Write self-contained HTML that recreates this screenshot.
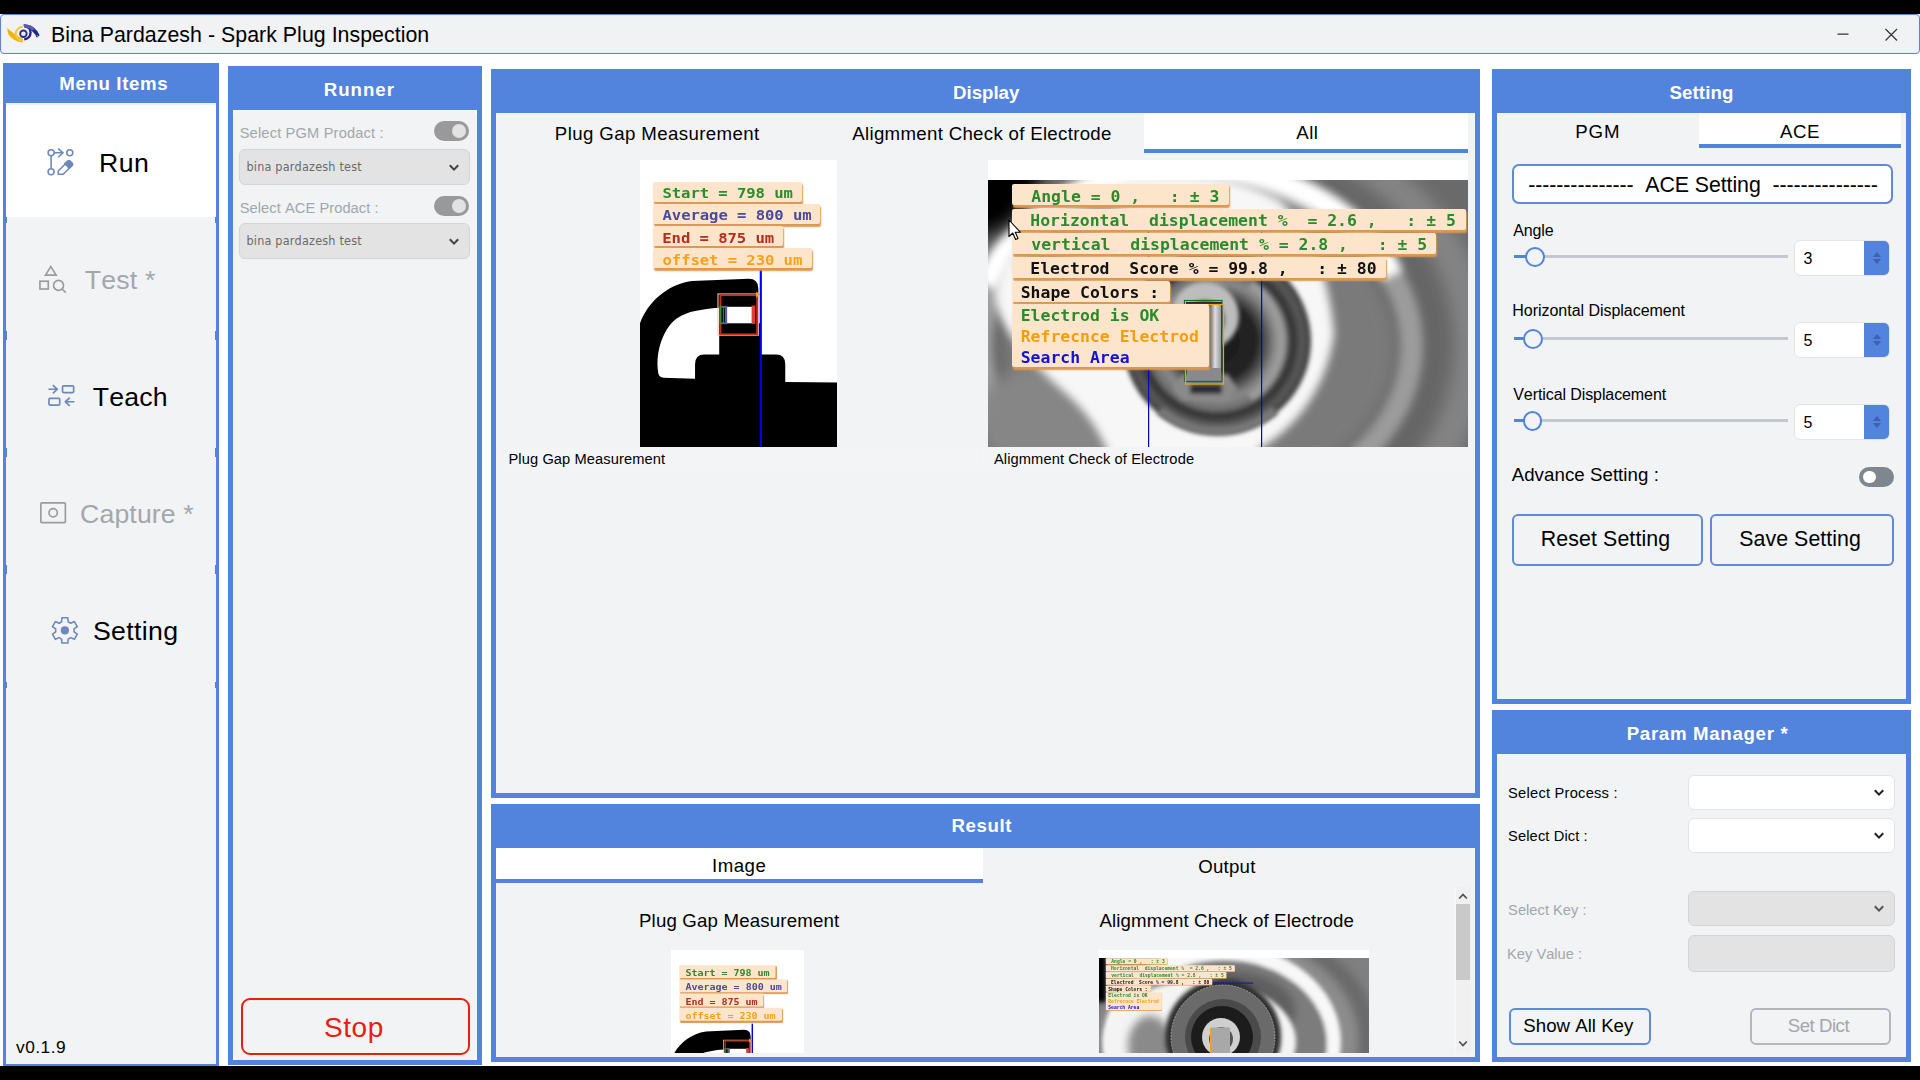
<!DOCTYPE html>
<html lang="en">
<head>
<meta charset="utf-8">
<title>Bina Pardazesh - Spark Plug Inspection</title>
<style>
*{box-sizing:border-box;margin:0;padding:0}
html,body{width:1920px;height:1080px;overflow:hidden;background:#fff}
body{position:relative;font-family:"Liberation Sans",Arial,sans-serif;color:#000;font-kerning:none}
.abs{position:absolute}
.bar{position:absolute;left:0;width:1920px;background:#000}
.panel{position:absolute;background:#5283dd}
.inner{position:absolute;background:#f1f3f5}
.t{position:absolute;white-space:pre;line-height:1}
#titlebar{position:absolute;left:0;top:14px;width:1920px;height:40px;background:#f0f2f4;border:1px solid #5f84cc;border-radius:4px;box-shadow:inset 0 0 0 1px #e6effb}
.sel{position:absolute;border-radius:6px;border:1px solid #d3d5d7;background:#e3e3e3}
.sel.w{background:#fff;border-color:#e1e3e6}
.tog{position:absolute;width:35px;height:20px;border-radius:10px;background:#999}
.tog i{position:absolute;top:3px;width:14px;height:14px;border-radius:7px;background:#e2e2e2}
.btn{position:absolute;border:2px solid #5f89da;border-radius:6px;background:#f1f3f5}
.tabon{position:absolute;background:#fff;border-bottom:4px solid #5283dd}
.lab{position:absolute;background:#fde5cb;border-radius:2px;box-shadow:1px 2.4px 1.6px #dc9850}
.lab .t{font-family:"DejaVu Sans Mono","Liberation Mono",monospace;font-weight:bold}
.spin{position:absolute;width:96px;height:35.4px;border-radius:6px;background:#fff;border:1px solid #e1e3e6;overflow:hidden}
.spin b{position:absolute;right:-1px;top:-1px;width:26.5px;height:36px;background:#5283dd}
.spin b:before{content:"";position:absolute;left:9.4px;top:11.6px;border:4.5px solid transparent;border-top:0;border-bottom:5px solid #3d62b0}
.spin b:after{content:"";position:absolute;left:9.4px;top:19px;border:4.5px solid transparent;border-bottom:0;border-top:5px solid #3d62b0}
.trk{position:absolute;height:3px;background:#c2c8cd}
.kn{position:absolute;width:19.6px;height:19.6px;margin:.2px;border-radius:10px;border:2.6px solid #5283dd;background:#f1f3f5}
</style>
</head>
<body>
<div class="bar" style="top:0;height:14px"></div>
<div class="bar" style="top:1066px;height:14px"></div>

<div id="titlebar"></div>
<svg class="abs" style="left:5.56px;top:23.26px" width="35.2" height="20.7" viewBox="150 250 950 560" fill="none">
<path d="M180 385 Q300 505 605 682 Q625 740 592 778 Q330 735 215 560 Q185 480 180 385Z" fill="#f6b400"/>
<path d="M602 350 A182 182 0 0 0 602 724" stroke="#f4c84a" stroke-width="56"/>
<circle cx="620" cy="540" r="88" stroke="#2a2a8a" stroke-width="50" fill="#e9ecfa"/>
<path d="M642 322 A170 182 0 0 1 642 690" stroke="#20208a" stroke-width="62"/>
<path d="M625 292 Q900 262 1060 580 L985 650 Q885 425 640 366Z" fill="#26268e"/>
<path d="M625 292 Q810 275 940 405 L865 450 Q780 385 640 366Z" fill="#5a5ab0"/>
<circle cx="994" cy="596" r="15" fill="#e8eaf6"/>
</svg>
<div class="t" style="left:50.90px;top:24.84px;font-size:21.33px;letter-spacing:0.034px;">Bina Pardazesh - Spark Plug Inspection</div>
<svg class="abs" style="left:1830px;top:20px" width="80" height="30" viewBox="0 0 80 30" fill="none" stroke="#333" stroke-width="1.2"><path d="M7.5 14.2H18.5M55.5 9L67 20.5M67 9L55.5 20.5"/></svg>
<div class="panel" style="left:3px;top:63px;width:216px;height:1003px"></div>
<div class="inner" style="left:6px;top:103px;width:210px;height:961px"></div>
<div class="t" style="left:59.25px;top:74.51px;font-size:18.67px;letter-spacing:0.639px;font-weight:700;color:#fff;">Menu Items</div>
<div class="abs" style="left:6px;top:103px;width:210px;height:114px;background:#fff;border-radius:3px;border-top:2px solid #edf3fc"></div>
<div class="abs" style="left:6px;top:217px;width:1px;height:6px;background:#5d7fc4"></div><div class="abs" style="left:215px;top:217px;width:1px;height:6px;background:#5d7fc4"></div>
<div class="abs" style="left:6px;top:331px;width:1px;height:9px;background:#5d7fc4"></div><div class="abs" style="left:215px;top:331px;width:1px;height:9px;background:#5d7fc4"></div>
<div class="abs" style="left:6px;top:448px;width:1px;height:9px;background:#5d7fc4"></div><div class="abs" style="left:215px;top:448px;width:1px;height:9px;background:#5d7fc4"></div>
<div class="abs" style="left:6px;top:565px;width:1px;height:9px;background:#5d7fc4"></div><div class="abs" style="left:215px;top:565px;width:1px;height:9px;background:#5d7fc4"></div>
<div class="abs" style="left:6px;top:682px;width:1px;height:6px;background:#5d7fc4"></div><div class="abs" style="left:215px;top:682px;width:1px;height:6px;background:#5d7fc4"></div>
<svg class="abs" style="left:45.56px;top:146.67px" width="28.89" height="30.00" viewBox="280 210 520 540" fill="none"><g stroke="#6f88ba" stroke-width="28"><circle cx="372" cy="315" r="54"/><circle cx="372" cy="655" r="54"/><circle cx="708" cy="315" r="54"/><path d="M372 369V601M426 315H585M500 240L585 315L500 395"/><path d="M500 700V642L672 470Q692 452 712 470L745 503Q763 523 745 543L590 700Z" stroke-linejoin="round"/><path d="M620 510L672 462Q692 446 712 462L752 503Q768 523 752 543L700 590Z" fill="#6f88ba"/></g></svg>
<div class="t" style="left:99.10px;top:149.96px;font-size:26.67px;letter-spacing:0.462px;">Run</div>
<svg class="abs" style="left:37.78px;top:263.89px" width="28.89" height="30.00" viewBox="320 250 520 540" fill="none"><g stroke="#999b9d" stroke-width="30"><path d="M550 298L455 450H647Z"/><rect x="355" y="560" width="150" height="140"/><circle cx="690" cy="635" r="90"/><path d="M755 700L820 765"/></g></svg>
<div class="t" style="left:84.70px;top:267.17px;font-size:26.67px;letter-spacing:0.210px;color:#a3a7ab;">Test *</div>
<svg class="abs" style="left:46.67px;top:384.44px" width="28.89" height="23.33" viewBox="300 260 520 420" fill="none"><g stroke="#6f88ba" stroke-width="30"><path d="M325 355H485M405 280L485 355L405 430"/><rect x="580" y="295" width="200" height="120" rx="18"/><rect x="335" y="520" width="195" height="120" rx="18"/><path d="M795 580H630M710 505L630 580L710 655"/></g></svg>
<div class="t" style="left:92.80px;top:384.07px;font-size:26.67px;letter-spacing:0.160px;">Teach</div>
<svg class="abs" style="left:38.89px;top:501.11px" width="28.89" height="23.89" viewBox="340 290 520 430" fill="none"><g stroke="#999b9d" stroke-width="30"><rect x="373" y="325" width="442" height="355" rx="18"/><circle cx="595" cy="503" r="75"/></g></svg>
<div class="t" style="left:80.10px;top:500.97px;font-size:26.67px;letter-spacing:0.120px;color:#a3a7ab;">Capture *</div>
<svg class="abs" style="left:51.11px;top:615.56px" width="27.78" height="28.89" viewBox="380 280 500 520" fill="none"><path d="M689.2 382.8 L683.3 312.2 L576.7 312.2 L570.8 382.8 L523.4 410.1 L459.4 379.9 L406.0 472.3 L464.2 512.6 L464.2 567.4 L406.0 607.7 L459.4 700.1 L523.4 669.9 L570.8 697.2 L576.7 767.8 L683.3 767.8 L689.2 697.2 L736.6 669.9 L800.6 700.1 L854.0 607.7 L795.8 567.4 L795.8 512.6 L854.0 472.3 L800.6 379.9 L736.6 410.1Z" stroke="#6f88ba" stroke-width="28" stroke-linejoin="round"/><circle cx="630" cy="540" r="74" fill="#6f88ba"/></svg>
<div class="t" style="left:92.90px;top:618.06px;font-size:26.67px;letter-spacing:0.373px;">Setting</div>
<div class="t" style="left:16.00px;top:1039.23px;font-size:17.33px;letter-spacing:0.487px;">v0.1.9</div>
<div class="panel" style="left:228px;top:66px;width:254px;height:999px"></div>
<div class="inner" style="left:233px;top:110px;width:244px;height:950px;background:#fff"></div>
<div class="inner" style="left:233px;top:110px;width:244px;height:950px;border-radius:7px"></div>
<div class="t" style="left:323.70px;top:80.56px;font-size:18.67px;letter-spacing:0.993px;font-weight:700;color:#fff;">Runner</div>
<div class="t" style="left:239.70px;top:125.76px;font-size:14.67px;letter-spacing:0.156px;color:#a3a7ab;">Select PGM Prodact :</div>
<div class="tog" style="left:434px;top:121px"><i style="left:18px"></i></div>
<div class="sel" style="left:239px;top:149px;width:231px;height:36px"></div>
<div class="t" style="left:246.50px;top:161.05px;font-size:12.50px;letter-spacing:0.202px;color:#6a6a6a;font-family:'DejaVu Sans Condensed','DejaVu Sans','Liberation Sans',sans-serif;">bina pardazesh test</div>
<svg class="abs" style="left:448px;top:163px" width="12" height="10" viewBox="0 0 12 10"><path d="M1.8 2.2 L6 6.6 L10.2 2.2" fill="none" stroke="#444" stroke-width="2.1"/></svg>
<div class="t" style="left:239.70px;top:200.76px;font-size:14.67px;letter-spacing:0.063px;color:#a3a7ab;">Select ACE Prodact :</div>
<div class="tog" style="left:434px;top:196px"><i style="left:18px"></i></div>
<div class="sel" style="left:239px;top:223px;width:231px;height:36px"></div>
<div class="t" style="left:246.50px;top:235.05px;font-size:12.50px;letter-spacing:0.202px;color:#6a6a6a;font-family:'DejaVu Sans Condensed','DejaVu Sans','Liberation Sans',sans-serif;">bina pardazesh test</div>
<svg class="abs" style="left:448px;top:237px" width="12" height="10" viewBox="0 0 12 10"><path d="M1.8 2.2 L6 6.6 L10.2 2.2" fill="none" stroke="#444" stroke-width="2.1"/></svg>
<div class="btn" style="left:241px;top:998px;width:229px;height:57px;border-color:#e8200a;border-radius:9px"></div>
<div class="t" style="left:324.00px;top:1013.80px;font-size:28.00px;letter-spacing:0.558px;color:#e8200a;">Stop</div>
<div class="panel" style="left:491px;top:69px;width:989px;height:729px"></div>
<div class="inner" style="left:496px;top:113px;width:979px;height:680px"></div>
<div class="t" style="left:953.00px;top:84.06px;font-size:18.67px;font-weight:700;color:#fff;">Display</div>
<div class="tabon" style="left:1144px;top:113px;width:324px;height:40px"></div>
<div class="t" style="left:554.80px;top:124.56px;font-size:18.67px;letter-spacing:0.387px;">Plug Gap Measurement</div>
<div class="t" style="left:852.30px;top:124.56px;font-size:18.67px;letter-spacing:0.302px;">Aligmment Check of Electrode</div>
<div class="t" style="left:1296.30px;top:124.46px;font-size:18.67px;letter-spacing:0.406px;">All</div>
<div class="abs" style="left:503px;top:447px;width:476px;height:23px;background:#f3f4f5"></div>
<div class="abs" style="left:982px;top:447px;width:493px;height:23px;background:#f3f4f5"></div>
<div class="t" style="left:508.50px;top:452.07px;font-size:14.67px;letter-spacing:0.094px;">Plug Gap Measurement</div>
<div class="t" style="left:993.90px;top:452.17px;font-size:14.67px;letter-spacing:0.112px;">Aligmment Check of Electrode</div>
<div class="abs" id="pgm" style="left:640px;top:160px;width:197px;height:287px;overflow:hidden;background:#fff"><svg class="abs" style="left:0;top:0" width="197" height="287" viewBox="65 32 644.2 938.5" preserveAspectRatio="none"><rect x="65" y="32" width="645" height="940" fill="#fff"/><path d="M65 972V566C90 500 150 440 235 428L420 420Q452 420 452 452V566H458V668H510Q540 668 540 700V758L710 760V972Z" fill="#000"/><path d="M125 730C118 690 125 650 136 621C150 585 165 565 185 550C205 537 225 530 245 526C270 520 295 517 324 515V668H275Q245 668 245 700V747L142 744Q128 742 125 730Z" fill="#fff"/><rect x="345" y="512" width="96" height="54" fill="#fff"/><rect x="320" y="470" width="132" height="135" fill="none" stroke="#f0c4bc" stroke-width="3.5"/><rect x="328" y="474" width="120" height="128" fill="none" stroke="#c83018" stroke-width="6"/><rect x="328" y="512" width="18" height="54" fill="none" stroke="#3a8a3a" stroke-width="6"/><rect x="338" y="512" width="10" height="54" fill="none" stroke="#5a5aa8" stroke-width="4"/><rect x="430" y="508" width="12" height="60" fill="#e04030"/><path d="M445 462L458 472L445 482Z" fill="#f5a623"/><rect x="456.5" y="390" width="7" height="582" fill="#0000f5"/></svg><div class="lab" style="left:12.8px;top:22.2px;width:149.0px;height:19.6px"></div><div class="t" style="left:22.50px;top:26.40px;font-size:15.60px;letter-spacing:-0.081px;font-weight:700;color:#2e8b2e;font-family:'DejaVu Sans Mono','Liberation Mono',monospace;transform:scaleY(.93);transform-origin:0 80%;">Start = 798 um</div><div class="lab" style="left:12.8px;top:44.2px;width:167.4px;height:19.6px"></div><div class="t" style="left:22.50px;top:48.45px;font-size:15.60px;letter-spacing:-0.068px;font-weight:700;color:#4b4b9b;font-family:'DejaVu Sans Mono','Liberation Mono',monospace;transform:scaleY(.93);transform-origin:0 80%;">Average = 800 um</div><div class="lab" style="left:12.8px;top:66.3px;width:130.6px;height:19.6px"></div><div class="t" style="left:22.30px;top:70.50px;font-size:15.60px;letter-spacing:-0.079px;font-weight:700;color:#b03020;font-family:'DejaVu Sans Mono','Liberation Mono',monospace;transform:scaleY(.93);transform-origin:0 80%;">End = 875 um</div><div class="lab" style="left:12.8px;top:88.4px;width:159.0px;height:19.6px"></div><div class="t" style="left:22.50px;top:92.55px;font-size:15.60px;letter-spacing:-0.074px;font-weight:700;color:#f5a21a;font-family:'DejaVu Sans Mono','Liberation Mono',monospace;transform:scaleY(.93);transform-origin:0 80%;">offset = 230 um</div></div>
<div class="abs" style="left:988px;top:160px;width:480px;height:20px;background:#fff"></div>
<div class="abs" id="ace" style="left:988px;top:180px;width:480px;height:267px;overflow:hidden;background:#777"><svg class="abs" style="left:0;top:0" width="480" height="267" viewBox="988 180 480 267"><defs>
<filter id="b2" x="-20%" y="-20%" width="140%" height="140%"><feGaussianBlur stdDeviation="2"/></filter>
<filter id="b4" x="-20%" y="-20%" width="140%" height="140%"><feGaussianBlur stdDeviation="4"/></filter>
<filter id="b8" x="-30%" y="-30%" width="160%" height="160%"><feGaussianBlur stdDeviation="8"/></filter>
<filter id="b14" x="-30%" y="-30%" width="160%" height="160%"><feGaussianBlur stdDeviation="14"/></filter>
<radialGradient id="gin" cx="0.5" cy="0.5" r="0.5">
<stop offset="0" stop-color="#1c1c1c"/><stop offset=".42" stop-color="#222"/><stop offset=".5" stop-color="#4a4a4a"/><stop offset=".62" stop-color="#8a8a8a"/><stop offset=".74" stop-color="#6e6e6e"/><stop offset=".8" stop-color="#2e2e2e"/><stop offset=".9" stop-color="#5a5a5a"/><stop offset="1" stop-color="#3c3c3c"/></radialGradient>
<linearGradient id="gr4" x1="0.1" y1="0" x2="0.35" y2="1"><stop offset="0" stop-color="#fff"/><stop offset=".3" stop-color="#f6f6f6"/><stop offset=".48" stop-color="#9a9a9a"/><stop offset="1" stop-color="#8a8a8a"/></linearGradient>
<linearGradient id="gel" x1="0" x2="1"><stop offset="0" stop-color="#555"/><stop offset=".5" stop-color="#ddd"/><stop offset="1" stop-color="#999"/></linearGradient>
</defs><rect x="988" y="180" width="480" height="267" fill="#6a6a6a"/><g filter="url(#b8)"><ellipse cx="1200" cy="345" rx="290" ry="240" fill="#848484"/><ellipse cx="1200" cy="345" rx="255" ry="212" fill="#666"/></g><g filter="url(#b4)"><ellipse cx="1196" cy="346" rx="215" ry="168" fill="none" stroke="#9c9c9c" stroke-width="24"/><path d="M986 285A215 168 0 0 1 1392 275" fill="none" stroke="#fff" stroke-width="24"/></g><g filter="url(#b8)"><ellipse cx="1200" cy="348" rx="196" ry="150" fill="#7a7a7a"/><ellipse cx="1050" cy="420" rx="75" ry="55" fill="#868686"/></g><g filter="url(#b8)"><path d="M960 150H1060L1030 196L1012 222L985 236H960Z" fill="#000"/></g><g filter="url(#b4)"><path d="M995 300C1002 335 1035 366 1062 390C1088 412 1104 436 1114 470H1240L1262 447C1292 430 1326 392 1334 334C1330 280 1312 232 1282 202C1200 150 1050 180 1012 250C1000 270 995 285 995 300Z" fill="#f7f7f7"/></g><g filter="url(#b8)"><path d="M1020 262Q1050 222 1105 196L1125 214Q1070 240 1048 284Z" fill="#9a9a9a"/></g><g filter="url(#b2)"><ellipse cx="1217" cy="341" rx="94" ry="93" fill="url(#gin)"/></g><g filter="url(#b2)"><circle cx="1205" cy="316" r="34" fill="#bdbdbd"/><circle cx="1205" cy="320" r="20" fill="#555"/></g><rect x="1186" y="302" width="36" height="80" fill="#2a2a2a"/><rect x="1209" y="304" width="12" height="68" fill="url(#gel)"/><rect x="1187" y="368" width="34" height="12" fill="#8a8a8a"/><g filter="url(#b2)"><path d="M1172 388L1183 374H1228L1238 390L1228 400H1182Z" fill="#8a8a8a"/><rect x="1190" y="384" width="32" height="10" fill="#2c2c2c"/><path d="M1250 285A66 66 0 0 1 1250 397" fill="none" stroke="#9a9a9a" stroke-width="9"/><path d="M1160 410A90 90 0 0 0 1275 410" fill="none" stroke="#777" stroke-width="10"/></g><rect x="1148" y="230" width="1.2" height="217" fill="#0000c8"/><rect x="1261" y="230" width="1.2" height="217" fill="#0000c8"/><rect x="1184.5" y="300.5" width="37.5" height="81" fill="none" stroke="#1d6b1d" stroke-width="1.2"/><rect x="1185.5" y="304.5" width="38" height="79.5" fill="none" stroke="#f5a21a" stroke-width="1.2"/></svg><div class="lab" style="left:23.8px;top:4.3px;width:216.9px;height:21px"></div><div class="t" style="left:23.51px;top:8.58px;font-size:16.45px;font-weight:700;color:#2b8a2b;font-family:'DejaVu Sans Mono','Liberation Mono',monospace;transform:scaleY(.93);transform-origin:0 80%;">  Angle = 0 ,   : ± 3</div><div class="lab" style="left:23.8px;top:28.5px;width:454.7px;height:21px"></div><div class="t" style="left:22.51px;top:32.77px;font-size:16.45px;font-weight:700;color:#2b8a2b;font-family:'DejaVu Sans Mono','Liberation Mono',monospace;transform:scaleY(.93);transform-origin:0 80%;">  Horizontal  displacement %  = 2.6 ,   : ± 5</div><div class="lab" style="left:23.8px;top:52.5px;width:424.5px;height:21px"></div><div class="t" style="left:23.51px;top:56.77px;font-size:16.45px;font-weight:700;color:#2b8a2b;font-family:'DejaVu Sans Mono','Liberation Mono',monospace;transform:scaleY(.93);transform-origin:0 80%;">  vertical  displacement % = 2.8 ,   : ± 5</div><div class="lab" style="left:23.8px;top:76.7px;width:374.2px;height:21px"></div><div class="t" style="left:22.51px;top:80.97px;font-size:16.45px;font-weight:700;color:#111;font-family:'DejaVu Sans Mono','Liberation Mono',monospace;transform:scaleY(.93);transform-origin:0 80%;">  Electrod  Score % = 99.8 ,   : ± 80</div><div class="lab" style="left:23.8px;top:100.7px;width:157.8px;height:21px"></div><div class="t" style="left:32.70px;top:104.97px;font-size:16.45px;font-weight:700;color:#111;font-family:'DejaVu Sans Mono','Liberation Mono',monospace;transform:scaleY(.93);transform-origin:0 80%;">Shape Colors :</div><div class="lab" style="left:23.8px;top:124px;width:197.2px;height:63.4px"></div><div class="t" style="left:32.70px;top:128.47px;font-size:16.45px;font-weight:700;color:#2b8a2b;font-family:'DejaVu Sans Mono','Liberation Mono',monospace;transform:scaleY(.93);transform-origin:0 80%;">Electrod is OK</div><div class="t" style="left:32.70px;top:149.47px;font-size:16.45px;font-weight:700;color:#f59d0a;font-family:'DejaVu Sans Mono','Liberation Mono',monospace;transform:scaleY(.93);transform-origin:0 80%;">Refrecnce Electrod</div><div class="t" style="left:32.70px;top:170.47px;font-size:16.45px;font-weight:700;color:#1414d2;font-family:'DejaVu Sans Mono','Liberation Mono',monospace;transform:scaleY(.93);transform-origin:0 80%;">Search Area</div></div>
<svg class="abs" style="left:1008px;top:218.6px" width="14" height="22" viewBox="0 0 14 22"><path d="M1 1V17.5L4.8 14L7.6 20.5L10 19.4L7.3 13.2H12.3Z" fill="#fff" stroke="#000" stroke-width="1.1" stroke-linejoin="round"/></svg>
<div class="panel" style="left:491px;top:804px;width:989px;height:258px"></div>
<div class="inner" style="left:496px;top:848px;width:979px;height:209px"></div>
<div class="t" style="left:951.50px;top:816.76px;font-size:18.67px;letter-spacing:0.599px;font-weight:700;color:#fff;">Result</div>
<div class="tabon" style="left:496px;top:848px;width:487px;height:35px"></div>
<div class="t" style="left:712.00px;top:857.26px;font-size:18.67px;letter-spacing:0.506px;">Image</div>
<div class="t" style="left:1198.30px;top:857.56px;font-size:18.67px;letter-spacing:0.216px;">Output</div>
<div class="t" style="left:639.00px;top:912.26px;font-size:18.67px;letter-spacing:0.166px;">Plug Gap Measurement</div>
<div class="t" style="left:1099.40px;top:912.26px;font-size:18.67px;letter-spacing:0.135px;">Aligmment Check of Electrode</div>
<div class="abs" style="left:1455px;top:887px;width:16px;height:166px;background:#f0f0f0;border-left:1px solid #f8f8f8"></div>
<div class="abs" style="left:1456px;top:904px;width:14px;height:76px;background:#c9c9c9"></div>
<svg class="abs" style="left:1456px;top:889px" width="14" height="162" viewBox="0 0 14 162" fill="none" stroke="#505050" stroke-width="1.8"><path d="M3.2 9.5L7 5.5L10.8 9.5M3.2 152.5L7 156.5L10.8 152.5"/></svg>
<div class="abs" style="left:671px;top:950px;width:133px;height:103px;overflow:hidden;background:#fff"><div class="abs" style="left:0;top:0;width:197px;height:287px;transform:scale(.673);transform-origin:0 0"><svg class="abs" style="left:0;top:0" width="197" height="287" viewBox="65 32 644.2 938.5" preserveAspectRatio="none"><rect x="65" y="32" width="645" height="940" fill="#fff"/><path d="M65 972V566C90 500 150 440 235 428L420 420Q452 420 452 452V566H458V668H510Q540 668 540 700V758L710 760V972Z" fill="#000"/><path d="M125 730C118 690 125 650 136 621C150 585 165 565 185 550C205 537 225 530 245 526C270 520 295 517 324 515V668H275Q245 668 245 700V747L142 744Q128 742 125 730Z" fill="#fff"/><rect x="345" y="512" width="96" height="54" fill="#fff"/><rect x="320" y="470" width="132" height="135" fill="none" stroke="#f0c4bc" stroke-width="3.5"/><rect x="328" y="474" width="120" height="128" fill="none" stroke="#c83018" stroke-width="6"/><rect x="328" y="512" width="18" height="54" fill="none" stroke="#3a8a3a" stroke-width="6"/><rect x="338" y="512" width="10" height="54" fill="none" stroke="#5a5aa8" stroke-width="4"/><rect x="430" y="508" width="12" height="60" fill="#e04030"/><path d="M445 462L458 472L445 482Z" fill="#f5a623"/><rect x="456.5" y="390" width="7" height="582" fill="#0000f5"/></svg></div><div class="abs" style="left:0;top:.7px;width:197px;height:287px;transform:scale(.645);transform-origin:0 0"><div class="lab" style="left:12.8px;top:22.2px;width:149.0px;height:19.6px"></div><div class="t" style="left:22.50px;top:26.40px;font-size:15.60px;letter-spacing:-0.081px;font-weight:700;color:#2e8b2e;font-family:'DejaVu Sans Mono','Liberation Mono',monospace;transform:scaleY(.93);transform-origin:0 80%;">Start = 798 um</div><div class="lab" style="left:12.8px;top:44.2px;width:167.4px;height:19.6px"></div><div class="t" style="left:22.50px;top:48.45px;font-size:15.60px;letter-spacing:-0.068px;font-weight:700;color:#4b4b9b;font-family:'DejaVu Sans Mono','Liberation Mono',monospace;transform:scaleY(.93);transform-origin:0 80%;">Average = 800 um</div><div class="lab" style="left:12.8px;top:66.3px;width:130.6px;height:19.6px"></div><div class="t" style="left:22.30px;top:70.50px;font-size:15.60px;letter-spacing:-0.079px;font-weight:700;color:#b03020;font-family:'DejaVu Sans Mono','Liberation Mono',monospace;transform:scaleY(.93);transform-origin:0 80%;">End = 875 um</div><div class="lab" style="left:12.8px;top:88.4px;width:159.0px;height:19.6px"></div><div class="t" style="left:22.50px;top:92.55px;font-size:15.60px;letter-spacing:-0.074px;font-weight:700;color:#f5a21a;font-family:'DejaVu Sans Mono','Liberation Mono',monospace;transform:scaleY(.93);transform-origin:0 80%;">offset = 230 um</div></div></div>
<div class="abs" style="left:1099px;top:950px;width:270px;height:103px;overflow:hidden;background:#fff"><svg class="abs" style="left:0;top:8px" width="270" height="96" viewBox="1099 958 270 96"><rect x="1099" y="958" width="270" height="96" fill="#808080"/><g filter="url(#b4)"><ellipse cx="1228" cy="1040" rx="150" ry="118" fill="#6a6a6a"/><ellipse cx="1226" cy="1040" rx="132" ry="104" fill="#8c8c8c"/></g><g filter="url(#b2)"><ellipse cx="1222" cy="1042" rx="119" ry="98" fill="#f8f8f8"/><ellipse cx="1224" cy="1044" rx="103" ry="84" fill="#7c7c7c"/></g><g filter="url(#b4)"><ellipse cx="1225" cy="1010" rx="70" ry="40" fill="#5e5e5e"/></g><g filter="url(#b2)"><ellipse cx="1200" cy="1042" rx="96" ry="62" fill="#f4f4f4"/></g><g filter="url(#b4)"><ellipse cx="1150" cy="1046" rx="22" ry="30" fill="#8a8a8a"/></g><rect x="1096" y="952" width="10" height="50" fill="#000" filter="url(#b2)"/><circle cx="1223" cy="1037" r="58" fill="#2e2e2e" filter="url(#b2)"/><circle cx="1223" cy="1037" r="52" fill="#6a6a6a"/><circle cx="1223" cy="1037" r="38" fill="#4a4a4a"/><circle cx="1223" cy="1037" r="52" fill="none" stroke="#bbb" stroke-width=".7" stroke-dasharray="2 1.2"/><circle cx="1222" cy="1037" r="31" fill="#1c1c1c"/><circle cx="1221" cy="1037" r="19" fill="#cfcfcf"/><circle cx="1221" cy="1039" r="12" fill="#555"/><rect x="1211" y="1027.5" width="19" height="30" fill="#a8a8a8"/><rect x="1210" y="1028" width="1.2" height="30" fill="#f5a21a"/><rect x="1213" y="982.5" width="40" height="1.2" fill="#1a1aaa"/></svg><div class="abs" style="left:0;top:6.6px;width:480px;height:267px;transform:scale(.284);transform-origin:0 0"><div class="lab" style="left:23.8px;top:4.3px;width:216.9px;height:21px"></div><div class="t" style="left:23.51px;top:8.58px;font-size:16.45px;font-weight:700;color:#2b8a2b;font-family:'DejaVu Sans Mono','Liberation Mono',monospace;transform:scaleY(.93);transform-origin:0 80%;">  Angle = 0 ,   : ± 3</div><div class="lab" style="left:23.8px;top:28.5px;width:454.7px;height:21px"></div><div class="t" style="left:22.51px;top:32.77px;font-size:16.45px;font-weight:700;color:#2b8a2b;font-family:'DejaVu Sans Mono','Liberation Mono',monospace;transform:scaleY(.93);transform-origin:0 80%;">  Horizontal  displacement %  = 2.6 ,   : ± 5</div><div class="lab" style="left:23.8px;top:52.5px;width:424.5px;height:21px"></div><div class="t" style="left:23.51px;top:56.77px;font-size:16.45px;font-weight:700;color:#2b8a2b;font-family:'DejaVu Sans Mono','Liberation Mono',monospace;transform:scaleY(.93);transform-origin:0 80%;">  vertical  displacement % = 2.8 ,   : ± 5</div><div class="lab" style="left:23.8px;top:76.7px;width:374.2px;height:21px"></div><div class="t" style="left:22.51px;top:80.97px;font-size:16.45px;font-weight:700;color:#111;font-family:'DejaVu Sans Mono','Liberation Mono',monospace;transform:scaleY(.93);transform-origin:0 80%;">  Electrod  Score % = 99.8 ,   : ± 80</div><div class="lab" style="left:23.8px;top:100.7px;width:157.8px;height:21px"></div><div class="t" style="left:32.70px;top:104.97px;font-size:16.45px;font-weight:700;color:#111;font-family:'DejaVu Sans Mono','Liberation Mono',monospace;transform:scaleY(.93);transform-origin:0 80%;">Shape Colors :</div><div class="lab" style="left:23.8px;top:124px;width:197.2px;height:63.4px"></div><div class="t" style="left:32.70px;top:128.47px;font-size:16.45px;font-weight:700;color:#2b8a2b;font-family:'DejaVu Sans Mono','Liberation Mono',monospace;transform:scaleY(.93);transform-origin:0 80%;">Electrod is OK</div><div class="t" style="left:32.70px;top:149.47px;font-size:16.45px;font-weight:700;color:#f59d0a;font-family:'DejaVu Sans Mono','Liberation Mono',monospace;transform:scaleY(.93);transform-origin:0 80%;">Refrecnce Electrod</div><div class="t" style="left:32.70px;top:170.47px;font-size:16.45px;font-weight:700;color:#1414d2;font-family:'DejaVu Sans Mono','Liberation Mono',monospace;transform:scaleY(.93);transform-origin:0 80%;">Search Area</div></div></div>
<div class="panel" style="left:1492px;top:69px;width:419px;height:635px"></div>
<div class="inner" style="left:1497px;top:113px;width:409px;height:586px"></div>
<div class="t" style="left:1669.50px;top:84.06px;font-size:18.67px;letter-spacing:0.113px;font-weight:700;color:#fff;">Setting</div>
<div class="tabon" style="left:1699px;top:113px;width:202px;height:35px"></div>
<div class="t" style="left:1575.20px;top:122.66px;font-size:18.67px;letter-spacing:0.872px;">PGM</div>
<div class="t" style="left:1780.00px;top:122.66px;font-size:18.67px;letter-spacing:0.492px;">ACE</div>
<div class="btn" style="left:1512px;top:164px;width:381px;height:40px;background:#fff;border-radius:7px"></div>
<div class="t" style="left:1528.20px;top:175.03px;font-size:21.33px;letter-spacing:-0.074px;">---------------  ACE Setting  ---------------</div>
<div class="t" style="left:1513.30px;top:222.80px;font-size:16.00px;letter-spacing:-0.131px;">Angle</div>
<div class="trk" style="left:1514px;top:255.1px;width:274px"></div>
<div class="trk" style="left:1514px;top:255.1px;width:21.1px;background:#5283dd"></div>
<div class="kn" style="left:1525.1px;top:246.9px"></div>
<div class="spin" style="left:1794px;top:240.2px"><b></b></div>
<div class="t" style="left:1803.40px;top:250.90px;font-size:16.00px;">3</div>
<div class="t" style="left:1512.30px;top:302.80px;font-size:16.00px;letter-spacing:-0.030px;">Horizontal Displacement</div>
<div class="trk" style="left:1514px;top:337.0px;width:274px"></div>
<div class="trk" style="left:1514px;top:337.0px;width:18.9px;background:#5283dd"></div>
<div class="kn" style="left:1522.9px;top:328.8px"></div>
<div class="spin" style="left:1794px;top:322.2px"><b></b></div>
<div class="t" style="left:1803.40px;top:332.90px;font-size:16.00px;">5</div>
<div class="t" style="left:1513.30px;top:387.10px;font-size:16.00px;letter-spacing:-0.094px;">Vertical Displacement</div>
<div class="trk" style="left:1514px;top:419.1px;width:274px"></div>
<div class="trk" style="left:1514px;top:419.1px;width:18.7px;background:#5283dd"></div>
<div class="kn" style="left:1522.7px;top:410.9px"></div>
<div class="spin" style="left:1794px;top:404.3px"><b></b></div>
<div class="t" style="left:1803.40px;top:415.00px;font-size:16.00px;">5</div>
<div class="t" style="left:1511.70px;top:466.47px;font-size:18.67px;letter-spacing:0.059px;">Advance Setting :</div>
<div class="tog" style="left:1859px;top:467px;height:19.5px;background:#7f868d"><i style="left:4px;top:3.5px;width:12.5px;height:12.5px;background:#fff"></i></div>
<div class="btn" style="left:1511.5px;top:513.5px;width:191px;height:52px"></div>
<div class="t" style="left:1540.70px;top:528.94px;font-size:21.33px;letter-spacing:0.118px;">Reset Setting</div>
<div class="btn" style="left:1709.5px;top:513.5px;width:184px;height:52px"></div>
<div class="t" style="left:1739.30px;top:528.94px;font-size:21.33px;letter-spacing:0.057px;">Save Setting</div>
<div class="panel" style="left:1492px;top:710px;width:419px;height:352px"></div>
<div class="inner" style="left:1497px;top:754px;width:409px;height:303px"></div>
<div class="t" style="left:1626.70px;top:725.26px;font-size:18.67px;letter-spacing:0.691px;font-weight:700;color:#fff;">Param Manager *</div>
<div class="t" style="left:1508.10px;top:786.06px;font-size:14.67px;letter-spacing:0.239px;">Select Process :</div>
<div class="sel w" style="left:1687.5px;top:774.5px;width:207px;height:35px"></div>
<svg class="abs" style="left:1873px;top:788px" width="12" height="10" viewBox="0 0 12 10"><path d="M1.8 2.2 L6 6.6 L10.2 2.2" fill="none" stroke="#222" stroke-width="2.1"/></svg>
<div class="t" style="left:1508.10px;top:828.97px;font-size:14.67px;letter-spacing:0.115px;">Select Dict :</div>
<div class="sel w" style="left:1687.5px;top:817.5px;width:207px;height:35px"></div>
<svg class="abs" style="left:1873px;top:831px" width="12" height="10" viewBox="0 0 12 10"><path d="M1.8 2.2 L6 6.6 L10.2 2.2" fill="none" stroke="#222" stroke-width="2.1"/></svg>
<div class="t" style="left:1508.10px;top:902.87px;font-size:14.67px;letter-spacing:0.024px;color:#a3a7ab;">Select Key :</div>
<div class="sel" style="left:1687.5px;top:890.5px;width:207px;height:35px"></div>
<svg class="abs" style="left:1873px;top:904px" width="12" height="10" viewBox="0 0 12 10"><path d="M1.8 2.2 L6 6.6 L10.2 2.2" fill="none" stroke="#555" stroke-width="2.1"/></svg>
<div class="t" style="left:1507.10px;top:946.76px;font-size:14.67px;color:#a3a7ab;">Key Value :</div>
<div class="sel" style="left:1687.5px;top:934.5px;width:207px;height:37px"></div>
<div class="btn" style="left:1508.5px;top:1008px;width:142.5px;height:36.5px"></div>
<div class="t" style="left:1523.30px;top:1017.16px;font-size:18.67px;letter-spacing:0.010px;">Show All Key</div>
<div class="btn" style="left:1749.5px;top:1008px;width:141px;height:36.5px;border-color:#b4b8bc"></div>
<div class="t" style="left:1787.80px;top:1017.16px;font-size:18.67px;letter-spacing:-0.505px;color:#a3a7ab;">Set Dict</div>
</body></html>
